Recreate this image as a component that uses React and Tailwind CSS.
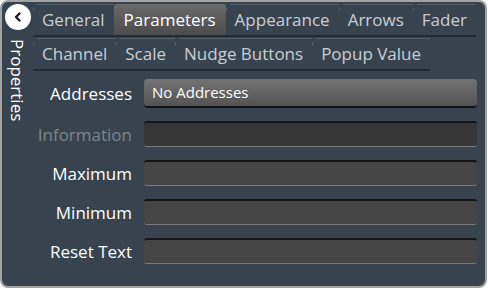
import React from "react";

const row1 = ["General", "Parameters", "Appearance", "Arrows", "Fader"];
const row2 = ["Channel", "Scale", "Nudge Buttons", "Popup Value"];

function Tab({ label, active }) {
  if (active) {
    return (
      <div className="h-full px-[10px] flex items-center text-white bg-gradient-to-b from-[#6a6a6a] to-[#4c4c4c] rounded-t-[3px]">
        {label}
      </div>
    );
  }
  return (
    <div className="relative h-full px-[9px] flex items-center text-[#c9ced3]">
      <div className="absolute left-[4px] right-0 top-0 h-px bg-[#56616c]" />
      <div className="absolute left-0 top-[4px] w-px h-[3px] bg-[#56616c]" />
      {label}
    </div>
  );
}

function Field({ label, disabled }) {
  return (
    <div className="flex items-center h-[26px]">
      <div className={`w-[99px] text-right whitespace-nowrap ${disabled ? "text-[#7d858c]" : "text-white"}`}>{label}</div>
      <div
        className={`ml-[12px] flex-1 h-full rounded-[3px] border-t-2 border-t-[#151515] border-b border-b-[#7a7a7a] ${
          disabled ? "bg-[#363636]" : "bg-[#454545]"
        }`}
      />
    </div>
  );
}

export default function App() {
  return (
    <div className="w-[488px] h-[289px] bg-white" style={{ fontFamily: "'Open Sans', 'Noto Sans', sans-serif" }}>
      <div className="w-[487px] h-[288px] bg-[#37444f] border-2 border-[#a3a3a3] rounded-[8px] flex text-[17px] leading-none overflow-hidden">
        {/* side strip */}
        <div className="w-[31px] flex flex-col items-center pt-[2px]">
          <div className="w-[26px] h-[26px] rounded-full bg-white flex items-center justify-center">
            <svg width="12" height="12" viewBox="0 0 12 12">
              <path d="M7.5 2.5 L4 6 L7.5 9.5" stroke="#1b1f24" strokeWidth="2.4" fill="none" strokeLinecap="round" strokeLinejoin="round" />
            </svg>
          </div>
          <div className="mt-[9px] text-white text-[17px]" style={{ writingMode: "vertical-rl" }}>
            Properties
          </div>
        </div>

        {/* content */}
        <div className="flex-1 flex flex-col pt-[2px] pr-[8px]">
          <div className="self-start flex h-[33px] border-b-2 border-[#222b33]">
            {row1.map((t) => (
              <Tab key={t} label={t} active={t === "Parameters"} />
            ))}
          </div>
          <div className="self-start flex h-[33px] mt-[1px] border-b-2 border-[#222b33]">
            {row2.map((t) => (
              <Tab key={t} label={t} />
            ))}
          </div>

          <div className="flex flex-col gap-[13px] mt-[8px]">
            <div className="flex items-center h-[29px]">
              <div className="w-[99px] text-right text-white">Addresses</div>
              <div className="ml-[12px] flex-1 h-full rounded-[4px] bg-gradient-to-b from-[#737373] to-[#535353] border-b-2 border-b-[#111] flex items-center pl-[8px] text-white text-[15px]">
                No Addresses
              </div>
            </div>
            <Field label="Information" disabled />
            <Field label="Maximum" />
            <Field label="Minimum" />
            <Field label="Reset Text" />
          </div>
        </div>
      </div>
    </div>
  );
}
